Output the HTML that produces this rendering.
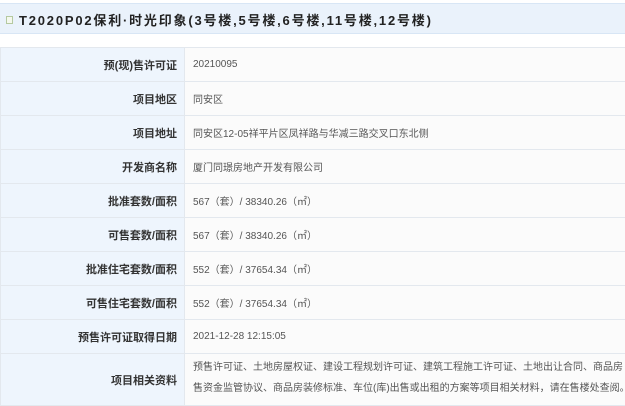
<!DOCTYPE html><html><head><meta charset="utf-8"><style>
body{margin:0;width:625px;height:403px;overflow:hidden;background:#fff;font-family:"Liberation Sans","Noto Sans CJK SC",sans-serif}
.hd{position:absolute;left:0;top:3px;width:625px;height:31px;background:#eaf2fb;border-top:1px solid #d8e6f5;border-bottom:1px solid #d8e6f5;box-sizing:border-box}
.hd span{position:absolute;left:19px;top:6px;font-size:13px;font-weight:bold;color:#222;letter-spacing:1.8px;white-space:nowrap}
.ic{position:absolute;left:6px;top:12px;width:7px;height:8px;border:1px solid #b5c9a0;background:#f4f8ee;box-sizing:border-box}
table{position:absolute;left:0;top:47px;width:640px;border-collapse:collapse}
td{border:1px solid #e3e8ee;height:33px;padding:0;font-size:10px;color:#555;white-space:nowrap}
td.l{width:184px;background:#eef5fd;text-align:right;padding-right:7px;box-sizing:border-box;font-size:11px;font-weight:bold;color:#333}
td.v{background:#fbfbfb;padding-left:8px}
td.v2{line-height:21px;padding-top:3px;vertical-align:top}
</style></head><body>
<div class="hd"><div class="ic"></div><span>T2020P02保利·时光印象(3号楼,5号楼,6号楼,11号楼,12号楼)</span></div>
<table>
<tr><td class="l">预(现)售许可证</td><td class="v">20210095</td></tr>
<tr><td class="l">项目地区</td><td class="v">同安区</td></tr>
<tr><td class="l">项目地址</td><td class="v">同安区12-05祥平片区凤祥路与华减三路交叉口东北侧</td></tr>
<tr><td class="l">开发商名称</td><td class="v">厦门同璟房地产开发有限公司</td></tr>
<tr><td class="l">批准套数/面积</td><td class="v">567（套）/ 38340.26（㎡）</td></tr>
<tr><td class="l">可售套数/面积</td><td class="v">567（套）/ 38340.26（㎡）</td></tr>
<tr><td class="l">批准住宅套数/面积</td><td class="v">552（套）/ 37654.34（㎡）</td></tr>
<tr><td class="l">可售住宅套数/面积</td><td class="v">552（套）/ 37654.34（㎡）</td></tr>
<tr><td class="l">预售许可证取得日期</td><td class="v">2021-12-28 12:15:05</td></tr>
<tr><td class="l" style="height:52px">项目相关资料</td><td class="v v2">预售许可证、土地房屋权证、建设工程规划许可证、建筑工程施工许可证、土地出让合同、商品房<br>售资金监管协议、商品房装修标准、车位(库)出售或出租的方案等项目相关材料，请在售楼处查阅。</td></tr>
</table>
</body></html>
